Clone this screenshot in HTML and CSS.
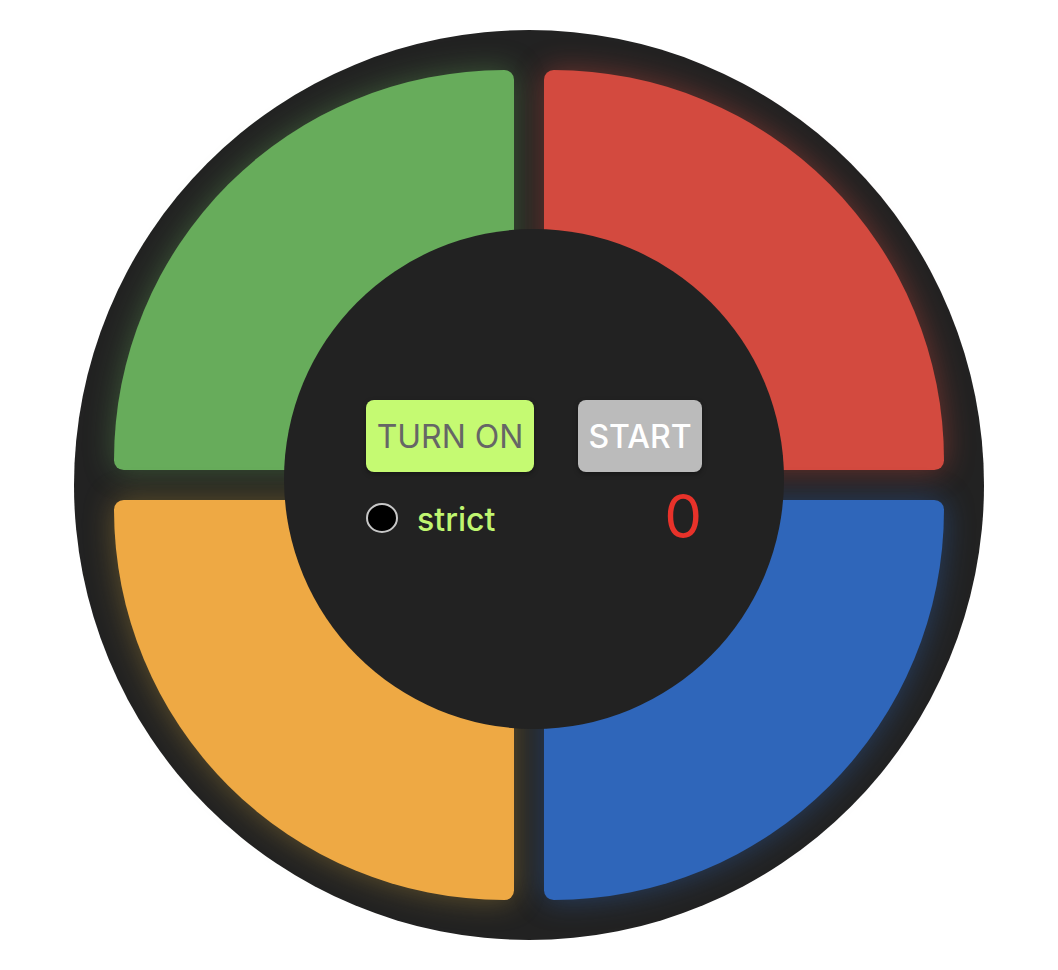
FILE: index.html
```html
<!DOCTYPE html>
<html lang="en">
<head>
<meta charset="utf-8">
<title>Simon</title>
<link rel="stylesheet" href="styles.css">
</head>
<body>
<div class="board">
  <div class="pad pad-green"></div>
  <div class="pad pad-red"></div>
  <div class="pad pad-yellow"></div>
  <div class="pad pad-blue"></div>
  <div class="hub">
    <div class="controls">
      <div class="row buttons">
        <button class="btn btn-power">TURN ON</button>
        <button class="btn btn-start">START</button>
      </div>
      <div class="row status">
        <label class="strict">
          <span class="radio"></span>
          <span class="strict-label">strict</span>
        </label>
        <span class="count">0</span>
      </div>
    </div>
  </div>
</div>
</body>
</html>
```
FILE: styles.css
```css
html, body {
  margin: 0;
  padding: 0;
  background: #ffffff;
}

body {
  font-family: "Inter", "Liberation Sans", sans-serif;
}

.board {
  position: relative;
  box-sizing: border-box;
  width: 910px;
  height: 910px;
  margin: 30px auto 0;
  padding: 40px;
  border-radius: 50%;
  background: #222222;
  display: grid;
  grid-template-columns: 400px 400px;
  grid-template-rows: 400px 400px;
  gap: 30px;
}

.pad {
  border-radius: 10px;
}

.pad-green {
  background: #67ac5b;
  border-top-left-radius: 400px;
  box-shadow: 0 0 30px rgba(103, 172, 91, 0.4);
}

.pad-red {
  background: #d34a3f;
  border-top-right-radius: 400px;
  box-shadow: 0 0 30px rgba(211, 74, 63, 0.45);
}

.pad-yellow {
  background: #eea944;
  border-bottom-left-radius: 400px;
  box-shadow: 0 0 30px rgba(200, 160, 60, 0.4);
}

.pad-blue {
  background: #2f66ba;
  border-bottom-right-radius: 400px;
  box-shadow: 0 0 30px rgba(47, 102, 186, 0.45);
}

.hub {
  position: absolute;
  left: 210px;
  top: 199px;
  width: 500px;
  height: 500px;
  border-radius: 50%;
  background: #222222;
}

.controls {
  width: 336px;
  padding: 171px 0 0 82px;
  display: flex;
  flex-direction: column;
}

.row {
  display: flex;
  justify-content: space-between;
  align-items: center;
}

.btn {
  height: 72px;
  border: none;
  border-radius: 8px;
  font-family: "Inter", "Liberation Sans", sans-serif;
  font-size: 32px;
  padding: 0;
  box-shadow: 0 2px 5px rgba(0, 0, 0, 0.35);
}

.btn-power {
  width: 168px;
  background: #c5fa72;
  color: #666666;
}

.btn-start {
  width: 124px;
  background: #bbbbbb;
  color: #ffffff;
  font-weight: 500;
}

.status {
  margin-top: 14px;
}

.strict {
  display: flex;
  align-items: center;
  padding-top: 8px;
}

.radio {
  box-sizing: border-box;
  width: 32px;
  height: 30px;
  border-radius: 50%;
  background: #000000;
  border: 2px solid #c8c8c8;
  margin-right: 19px;
  margin-top: -4px;
}

.strict-label {
  font-size: 32px;
  line-height: 32px;
  font-weight: 500;
  color: #c0f570;
}

.count {
  font-size: 60px;
  line-height: 60px;
  color: #e8322a;
}
```
